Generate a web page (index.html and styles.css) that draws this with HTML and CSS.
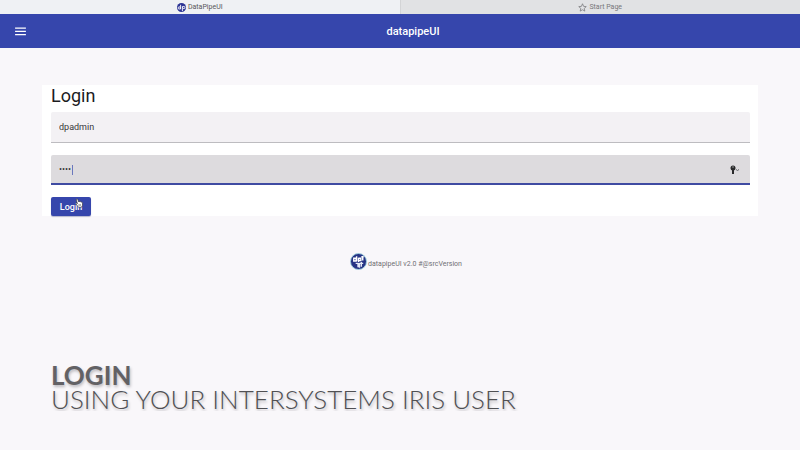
FILE: index.html
```
<!DOCTYPE html>
<html lang="en">
  <head>
    <meta charset="UTF-8">
    <meta name="viewport" content="width=device-width, initial-scale=1.0">
    <title>DataPipeUI</title>
    <link rel="stylesheet" href="styles.css">
  </head>
  <body>
    <nav class="tabs">
      <a href="#" class="tab active">
        <svg class="tab-logo" viewBox="0 0 20 20">
          <circle cx="10" cy="10" r="10" fill="#2b3394"/>
          <g fill="none" stroke="#fff" stroke-width="2">
            <circle cx="5" cy="11" r="2.5"/>
            <path d="M8 4v10M12 7v11"/>
            <circle cx="15" cy="10" r="2.500"/>
          </g>
        </svg>
        <span>DataPipeUI</span>
      </a>
      <a href="#" class="tab">
        <svg class="star" viewBox="0 0 24 24">
          <path d="M12 2l3 7 7 .6-5.500 5 1.700 7L12 18l-6.200 3.600 1.700-7L2 9.600 9 9z" fill="none" stroke="#77777a" stroke-width="2"/>
        </svg>
        <span>Start Page</span>
      </a>
    </nav>

    <header class="toolbar">
      <button type="button" class="menu" aria-label="Menu">
        <svg viewBox="0 0 12 10">
          <path d="M1 2h10M1 5h10M1 8h10" stroke="#fff" stroke-width="1.300"/>
        </svg>
      </button>
      <div class="title">datapipeUI</div>
    </header>

    <main>
      <form class="card">
        <h1>Login</h1>
        <div class="field">
          <input type="text" value="dpadmin" aria-label="Username">
        </div>
        <div class="field focused">
          <input type="password" value="demo" aria-label="Password">
          <span class="caret"></span>
          <svg class="key" viewBox="0 0 10 10">
            <circle cx="3" cy="3" r="2.500" fill="#29292b"/>
            <path d="M3 4v5" stroke="#29292b" stroke-width="2"/>
            <circle cx="3" cy="2" r=".7" fill="#bbb"/>
            <path d="M6 4.500l1.500 1 1.500-1" fill="none" stroke="#66666a"/>
          </svg>
        </div>
        <div class="actions">
          <button type="button" class="submit">Login</button>
          <!-- mouse pointer -->
          <svg class="pointer" viewBox="0 0 16 20">
            <path d="M3 2c1-1 2 0 2.500 1l2 5 1-1 2 .5 1-.5 2 1.500c1 0 1.500 1 1.500 2v4l-2 4H7L2 12c-1-2 1-2.500 2-1.500l1 1L2.500 4z" fill="#fff" stroke="#333" stroke-width="1.300"/>
            <path d="M8 12v4M10.500 12v4" stroke="#333"/>
          </svg>
        </div>
      </form>

      <footer>
        <svg class="logo" viewBox="0 0 36 36">
          <circle cx="18" cy="18" r="17" fill="#263384" stroke="#a5d5df" stroke-width="2"/>
          <g fill="none" stroke="#fff" stroke-width="3">
            <path d="M8 11h5v6H8zM14 7v10M18 10v9M18 11h5v5h-5M27 8v8M24 8h5"/>
            <path d="M12 22h5v8M20 21v10M24 19v10M20 22h8" stroke="#e3e8f5"/>
          </g>
        </svg>
        <span class="version">datapipeUI v2.0 #@srcVersion</span>
      </footer>
    </main>

    <section class="caption">
      <strong>LOGIN</strong>
      <p>USING YOUR INTERSYSTEMS IRIS USER</p>
    </section>
  </body>
</html>
```

FILE: styles.css
```
* {
  box-sizing: border-box;
  margin: 0;
  padding: 0;
}

body {
  background-color: #f9f7fa;
  color: #1c1c1e;
  font-family: Roboto, sans-serif;
}

.tabs {
  display: flex;
  height: 14px;
}
.tab {
  display: flex;
  flex: 1;
  align-items: center;
  justify-content: center;
  gap: 2px;
  background-color: #e1e2e4;
  color: #77777a;
  font-size: 7px;
  text-decoration: none;
}
.tab.active {
  background-color: #eff1f4;
  color: #57575a;
}
.tab + .tab {
  border-left: 1px solid #d3d4d6;
}
.tab-logo,
.star {
  width: 9px;
  height: 9px;
}

.toolbar {
  display: grid;
  grid-template-columns: 1fr auto 1fr;
  align-items: center;
  height: 34px;
  padding: 0 14px;
  background-color: #3646ac;
  color: #fff;
}
.menu {
  width: 13px;
  height: 11px;
  border: 0;
  background: none;
}
.menu svg {
  display: block;
}
.title {
  padding-left: 26px;
  font-size: 11px;
  font-weight: 500;
}

main {
  padding: 37px 42px 0;
}
.card {
  padding: 0 8px 0 9px;
  background-color: #fff;
}
h1 {
  padding-bottom: 5px;
  font-size: 18px;
  font-weight: 400;
  line-height: 22px;
}
.field {
  position: relative;
  margin-bottom: 12px;
}
.field input {
  display: block;
  width: 100%;
  height: 31px;
  padding: 0 8px;
  border: 0;
  border-bottom: 1px solid #bdbcc0;
  border-radius: 2px 2px 0 0;
  outline: none;
  background-color: #f3f1f4;
  color: #38383a;
  font-family: inherit;
  font-size: 9px;
}
.field.focused input {
  height: 30px;
  border-bottom: 2px solid #3f4ba2;
  background-color: #dddbde;
}
.caret {
  position: absolute;
  top: 10px;
  left: 21px;
  width: 1px;
  height: 10px;
  background-color: #6b78bd;
}
.key {
  position: absolute;
  top: 10px;
  right: 10px;
  width: 10px;
  height: 10px;
}
.actions {
  position: relative;
}
.submit {
  display: block;
  width: 40px;
  height: 19px;
  border: 0;
  border-radius: 2px;
  background-color: #3646ac;
  box-shadow: 0 1px 1px #b4b6ce;
  color: #fff;
  font-family: inherit;
  font-size: 9px;
  font-weight: 500;
}
.pointer {
  position: absolute;
  top: 1px;
  left: 24px;
  width: 8px;
  height: 10px;
}

footer {
  display: flex;
  align-items: center;
  justify-content: center;
  gap: 1px;
  margin-top: 37px;
  padding-left: 12px;
  color: #707073;
  font-size: 7px;
}
.logo {
  width: 17px;
  height: 17px;
}
.version {
  padding-top: 4px;
}

.caption {
  margin: 93px 51px 0;
  color: #505053;
  font-family: Lato, sans-serif;
  font-size: 26px;
  font-weight: 300;
  line-height: 24px;
  text-shadow: 1px 2px 3px #bab8bd;
}
.caption strong {
  display: block;
  color: #626165;
  font-weight: 700;
}
```
